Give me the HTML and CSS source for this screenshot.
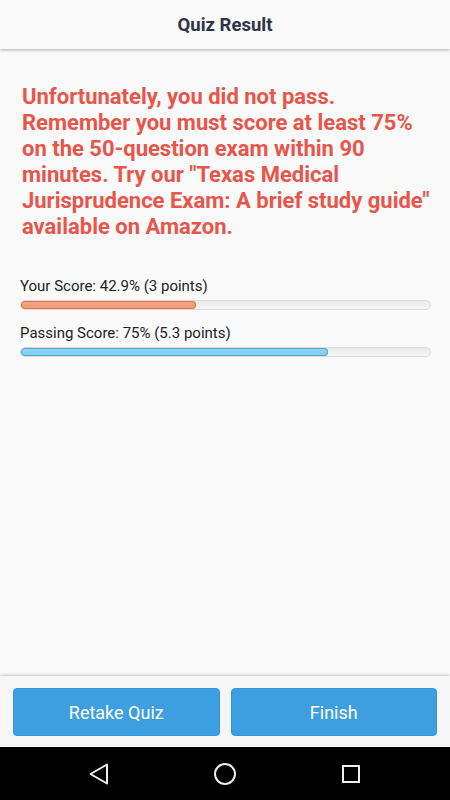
FILE: index.html
```html
<!DOCTYPE html>
<html lang="en">
<head>
    <title>Quiz Result</title>
    <link rel="stylesheet" href="styles.css">
</head>
<body>
    <header class="topbar">
        <h1>Quiz Result</h1>
    </header>

    <main class="content">
        <p class="message">Unfortunately, you did not pass. Remember you must score at least 75% on the 50-question exam within 90 minutes. Try our "Texas Medical Jurisprudence Exam: A brief study guide" available on Amazon.</p>

        <div class="score">
            <div class="score-label">Your Score: 42.9% (3 points)</div>
            <div class="track"><div class="fill fill-red" style="width: 42.9%"></div></div>
        </div>
        <div class="score">
            <div class="score-label">Passing Score: 75% (5.3 points)</div>
            <div class="track"><div class="fill fill-blue" style="width: 75%"></div></div>
        </div>
    </main>

    <footer class="actions">
        <button type="button" class="btn">Retake Quiz</button>
        <button type="button" class="btn">Finish</button>
    </footer>

    <nav class="navbar">
        <svg width="24" height="24" viewBox="0 0 24 24"><path d="M20 2.5 L3.5 12 L20 21.5 Z" fill="none" stroke="#eee" stroke-width="2" stroke-linejoin="round"/></svg>
        <svg width="24" height="24" viewBox="0 0 24 24"><circle cx="12" cy="12" r="10" fill="none" stroke="#eee" stroke-width="2"/></svg>
        <svg width="24" height="24" viewBox="0 0 24 24"><rect x="4" y="4" width="16" height="16" fill="none" stroke="#eee" stroke-width="2"/></svg>
    </nav>
</body>
</html>
```

FILE: styles.css
```css
body {
    margin: 0;
    height: 800px;
    display: flex;
    flex-direction: column;
    font-family: Roboto, "Liberation Sans", sans-serif;
    background-color: #fafafa;
    color: #222;
}

.topbar {
    height: 49px;
    display: flex;
    align-items: center;
    justify-content: center;
    background-color: #f9f9f9;
    box-shadow: 0 1px 3px rgba(0, 0, 0, 0.3);
    position: relative;
    z-index: 1;
}

.topbar h1 {
    margin: 0;
    font-size: 18.5px;
    font-weight: 700;
    color: #2d3446;
}

.content {
    flex: 1;
    padding: 35px 19px 0 20px;
}

.message {
    margin: 0 0 36px 2px;
    font-size: 22px;
    font-weight: 700;
    line-height: 26px;
    color: #e8554a;
}

.score {
    margin-bottom: 13px;
}

.score-label {
    font-size: 15px;
    line-height: 20px;
    color: #222;
    margin-bottom: 4px;
}

.track {
    height: 10px;
    box-sizing: border-box;
    border: 1px solid #dcdcdc;
    border-radius: 5px;
    background: linear-gradient(#e9e9e9, #f7f7f7);
    overflow: hidden;
}

.fill {
    height: 100%;
    box-sizing: border-box;
    border-radius: 5px;
}

.fill-red {
    background: linear-gradient(#f6a98c, #f29675);
    box-shadow: inset 0 0 0 1px #e9743f;
}

.fill-blue {
    background: linear-gradient(#9bd6ee, #80c8e6);
    box-shadow: inset 0 0 0 1px #4aadd8;
}

.actions {
    height: 71px;
    box-sizing: border-box;
    display: flex;
    gap: 11px;
    padding: 12px 13px 11px 13px;
    background-color: #f6f6f6;
    box-shadow: 0 -1px 3px rgba(0, 0, 0, 0.2);
}

.btn {
    flex: 1;
    border: 1px solid #2f97dd;
    border-radius: 4px;
    background-color: #3d9fe0;
    color: #fff;
    font-family: Roboto, "Liberation Sans", sans-serif;
    font-size: 18px;
}

.navbar {
    height: 53px;
    background-color: #000;
    display: flex;
    align-items: center;
    justify-content: center;
    gap: 102px;
}
```
